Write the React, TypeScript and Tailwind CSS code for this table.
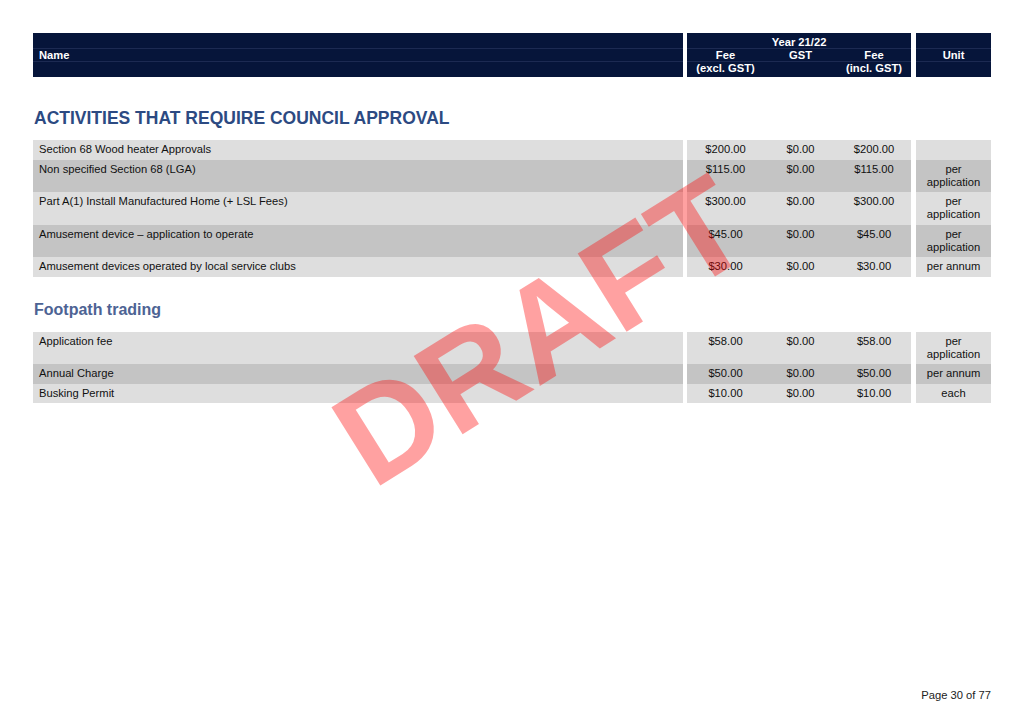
import React from "react";

type R = { name: string; a: string; b: string; c: string; unit: React.ReactNode; dark?: boolean };

const PA = (
  <>
    per
    <br />
    application
  </>
);

const sec1: R[] = [
  { name: "Section 68 Wood heater Approvals", a: "$200.00", b: "$0.00", c: "$200.00", unit: "" },
  { name: "Non specified Section 68 (LGA)", a: "$115.00", b: "$0.00", c: "$115.00", unit: PA, dark: true },
  { name: "Part A(1) Install Manufactured Home (+ LSL Fees)", a: "$300.00", b: "$0.00", c: "$300.00", unit: PA },
  { name: "Amusement device \u2013 application to operate", a: "$45.00", b: "$0.00", c: "$45.00", unit: PA, dark: true },
  { name: "Amusement devices operated by local service clubs", a: "$30.00", b: "$0.00", c: "$30.00", unit: "per annum" },
];

const sec2: R[] = [
  { name: "Application fee", a: "$58.00", b: "$0.00", c: "$58.00", unit: PA },
  { name: "Annual Charge", a: "$50.00", b: "$0.00", c: "$50.00", unit: "per annum", dark: true },
  { name: "Busking Permit", a: "$10.00", b: "$0.00", c: "$10.00", unit: "each" },
];

function Row({ r }: { r: R }) {
  const bg = r.dark ? "bg-[#c4c4c4]" : "bg-[#dedede]";
  return (
    <div className="flex text-[11.2px] leading-[13px] text-[#111111]">
      <div className={`w-[650px] ${bg} pl-[6px] pt-[3px] pb-[3.5px]`}>{r.name}</div>
      <div className={`ml-[4px] w-[224px] flex ${bg} pt-[3px] pb-[3.5px]`}>
        <div className="w-[77px] text-center">{r.a}</div>
        <div className="w-[73px] text-center">{r.b}</div>
        <div className="w-[74px] text-center">{r.c}</div>
      </div>
      <div className={`ml-[5px] w-[75px] ${bg} text-center pt-[3px] pb-[3.5px]`}>{r.unit}</div>
    </div>
  );
}

function HeadCol({ children, className }: { children: React.ReactNode; className: string }) {
  return (
    <div className={`${className} flex flex-col bg-[#06153a]`}>
      <div className="h-[16px] border-b border-[#1c2a52]" />
      <div className="h-[13px] border-b border-[#1c2a52] flex items-center">{children}</div>
      <div className="h-[15px]" />
    </div>
  );
}

export default function App() {
  return (
    <div className="relative w-[1024px] h-[717px] overflow-hidden bg-white font-['Liberation_Sans',Arial,sans-serif] flex flex-col">
      <div className="pt-[33px] pl-[33px] flex flex-col">
        {/* header */}
        <div className="flex text-[11.2px] leading-[13px] font-bold text-white">
          <HeadCol className="w-[650px]">
            <span className="pl-[6px]">Name</span>
          </HeadCol>
          <div className="ml-[4px] w-[224px] flex flex-col bg-[#06153a]">
            <div className="h-[16px] border-b border-[#1c2a52] pt-[3px] text-center">Year 21/22</div>
            <div className="h-[13px] border-b border-[#1c2a52] flex">
              <div className="w-[77px] text-center">Fee</div>
              <div className="w-[73px] text-center">GST</div>
              <div className="w-[74px] text-center">Fee</div>
            </div>
            <div className="h-[15px] flex">
              <div className="w-[77px] text-center">(excl. GST)</div>
              <div className="w-[73px]" />
              <div className="w-[74px] text-center">(incl. GST)</div>
            </div>
          </div>
          <HeadCol className="ml-[5px] w-[75px]">
            <span className="w-full text-center">Unit</span>
          </HeadCol>
        </div>

        <h2 className="mt-[31px] text-[17.5px] leading-[20px] font-bold text-[#2c4a82] pl-[1px]">
          ACTIVITIES THAT REQUIRE COUNCIL APPROVAL
        </h2>
        <div className="mt-[12px] flex flex-col">
          {sec1.map((r, i) => (
            <Row key={i} r={r} />
          ))}
        </div>

        <h2 className="mt-[23px] text-[16px] leading-[20px] font-bold text-[#4d6394] pl-[1px]">Footpath trading</h2>
        <div className="mt-[12px] flex flex-col">
          {sec2.map((r, i) => (
            <Row key={i} r={r} />
          ))}
        </div>
      </div>

      <div className="mt-auto pb-[15px] pr-[33px] text-right text-[11.2px] leading-[14px] text-[#222]">Page 30 of 77</div>

      <div className="pointer-events-none absolute left-[541px] top-[331px] -translate-x-1/2 -translate-y-1/2 -rotate-[32deg] whitespace-nowrap text-[134px] leading-none font-bold text-[rgba(255,0,0,0.37)]">
        DRAFT
      </div>
    </div>
  );
}
